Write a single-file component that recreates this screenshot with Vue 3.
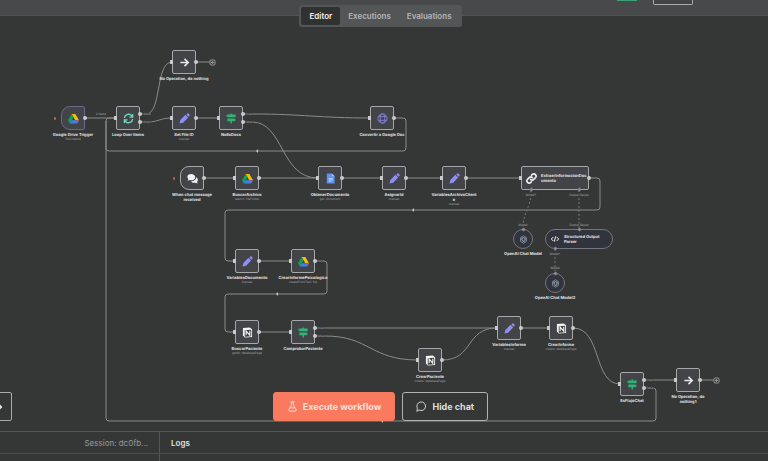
<template>
  <div class="app">
    <header class="topbar">
      <nav class="tabs">
        <button v-for="t in tabs" :key="t" class="tab" :class="{ active: t === tab }" @click="tab = t">{{ t }}</button>
      </nav>
      <div class="top-actions">
        <button class="btn-state" aria-label="Active"></button>
        <button class="btn-outline" aria-label="Save"></button>
      </div>
    </header>

    <main class="canvas">
      <svg class="edges" width="100%" height="100%">
        <path v-for="(d, i) in edges" :key="i" :d="d" class="edge" />
        <path v-for="(d, i) in dashed" :key="'d' + i" :d="d" class="edge dashed" />
        <path v-for="a in arrows" :key="a.x" :d="`M${a.x - 1} ${a.y}l2 -2v4z`" class="arrow" />
        <g v-for="p in plus" :key="p.x" class="plus">
          <rect :x="p.x" :y="p.y - 2" width="5" height="5" rx="1" />
          <path :d="`M${p.x + 1} ${p.y}.5h3M${p.x + 2}.5 ${p.y - 1}v3`" />
        </g>
        <text v-for="(t, i) in wireLabels" :key="'t' + i" :x="t[0]" :y="t[1]" class="wire-label">{{ t[2] }}</text>
      </svg>

      <div
        v-for="n in nodes"
        :key="n.id"
        class="node"
        :class="n.kind"
        :style="{ left: n.x + 'px', top: n.y + 'px' }"
      >
        <div class="box">
          <svg viewBox="0 0 24 24" class="icon" v-html="icons[n.icon]"></svg>
          <div v-if="isWide(n)" class="inner-label">
            <div v-for="l in n.label" :key="l">{{ l }}</div>
          </div>
        </div>
        <span v-if="n.in" class="port in"></span>
        <span v-if="n.out === 1" class="port out"></span>
        <template v-if="n.out === 2">
          <span class="port out up"></span>
          <span class="port out down"></span>
        </template>
        <span v-for="p in n.bottom" :key="p" class="port diamond" :style="{ left: p + 'px' }"></span>
        <span v-if="n.top" class="port top-port" :style="{ left: n.top + 'px' }"></span>
        <div v-if="!isWide(n)" class="caption">
          <div v-for="l in n.label" :key="l" class="title">{{ l }}</div>
          <div v-if="n.sub" class="sub">{{ n.sub }}</div>
        </div>
      </div>

      <button class="side-btn" aria-label="Expand">
        <svg viewBox="0 0 12 12" width="12" height="12"><path d="M1 6h9M7 3l3 3-3 3" fill="none" stroke="#e4e5e6" stroke-width="2" /></svg>
      </button>

      <div class="actions">
        <button class="btn primary">
          <svg viewBox="0 0 24 24" width="11" height="11" fill="none" stroke="currentColor" stroke-width="2" stroke-linecap="round" stroke-linejoin="round"><path d="M8 2h8M10 2v7L4 19a2 2 0 002 3h12a2 2 0 002-3L14 9V2M7 15h10" /></svg>
          Execute workflow
        </button>
        <button class="btn secondary">
          <svg viewBox="0 0 24 24" width="11" height="11" fill="none" stroke="currentColor" stroke-width="2" stroke-linecap="round" stroke-linejoin="round"><path d="M7 20a9.500 9.500 0 10-4-4L2 22z" /></svg>
          Hide chat
        </button>
      </div>
    </main>

    <footer class="panel">
      <div class="panel-head">
        <div class="session">Session: dc0fb...</div>
        <div class="logs">Logs</div>
      </div>
      <div class="panel-body">
        <div class="session"></div>
        <div class="logs"></div>
      </div>
    </footer>
  </div>
</template>

<script setup>
import { ref } from 'vue'

const tabs = ['Editor', 'Executions', 'Evaluations']
const tab = ref('Editor')

const icons = {
  arrow: '<path d="M3 12h17M12 4l8 8-8 8" fill="none" stroke="#e6e6ea" stroke-width="3.500"/>',
  drive: '<path d="M8 2h8l8 14h-8z" fill="#fbbc05"/><path d="M8 2l4 7-8 14-4-7z" fill="#12a15c"/><path d="M8 16h16l-4 7H4z" fill="#3b82f0"/><path d="M19 16h5l-4 7z" fill="#ea4335"/>',
  loop: '<path d="M3 11a9 9 0 0115-6l3 3M21 2v7h-7M21 13a9 9 0 01-15 6l-3-3M3 22v-7h7" fill="none" stroke="#6fd6bb" stroke-width="3"/>',
  pencil: '<path d="M1 23l2-8L14 4l6 6L9 21zM16 3l2-2q2-1 4 1t1 4l-2 2z" fill="#8f8ff2"/>',
  sign: '<path d="M10 1h3v2h8v6H3V3h7zM3 12h15l4 3-4 3h-5v5h-3v-5H3z" fill="#2fb574"/><path d="M3 3v6L0 6z" fill="#2fb574"/>',
  globe: '<g fill="none" stroke="#8583d8" stroke-width="2"><circle cx="12" cy="12" r="10"/><ellipse cx="12" cy="12" rx="5" ry="10"/><path d="M3 8h18M3 16h18"/></g>',
  chat: '<path d="M9 2c5 0 9 3 9 7s-4 7-9 7l-3-1-5 2 2-4C-2 8 2 2 9 2z" fill="#f1f1f3"/><path d="M20 9c4 2 5 7 2 10l1 4-5-2c-4 1-7 0-9-3 6 0 11-3 11-9z" fill="#f1f1f3"/>',
  doc: '<path d="M4 1h11l6 6v16H4z" fill="#5b94f5"/><path d="M15 1l6 6h-6z" fill="#a9c6fa"/><path d="M8 12h9M8 15h9M8 18h6" stroke="#dfe9fd" stroke-width="1.500"/>',
  link: '<g fill="none" stroke="#f1f1f3" stroke-width="3.500" stroke-linecap="round"><path d="M10 14a5 5 0 007 0l4-4a5 5 0 00-7-7l-2 2"/><path d="M14 10a5 5 0 00-7 0l-4 4a5 5 0 007 7l2-2"/></g>',
  code: '<path d="M7 6l-6 6 6 6M17 6l6 6-6 6M14 4l-4 16" fill="none" stroke="#f1f1f3" stroke-width="3"/>',
  openai: '<g fill="none" stroke="#8e95a5" stroke-width="2"><path d="M12 2l8 5v10l-8 5-8-5V7z"/><path d="M8 4v10l8 5M4 12l8-5 8 5M16 5v10l-8 5M8 10l4-3 4 3v4l-4 3-4-3z"/></g>',
  notion: '<path d="M2 2l15-1 5 4v17l-16 1-4-5z" fill="#f3f3f3"/><path d="M6 7l14-1v14L6 21z" fill="#3a3a3d"/><path d="M9 18V9l8 9V8" fill="none" stroke="#f3f3f3" stroke-width="2.500"/>',
}

const nodes = [
  { id: 1, x: 172, y: 34, icon: 'arrow', label: ['No Operation, do nothing'], in: 1, out: 1 },
  { id: 2, x: 61, y: 90, icon: 'drive', kind: 'trigger', label: ['Google Drive Trigger'], sub: 'fileCreated', out: 1 },
  { id: 3, x: 116, y: 90, icon: 'loop', label: ['Loop Over Items'], in: 1, out: 2 },
  { id: 4, x: 172, y: 90, icon: 'pencil', label: ['Set File ID'], sub: 'manual', in: 1, out: 1 },
  { id: 5, x: 219, y: 90, icon: 'sign', label: ['NoEsDocs'], in: 1, out: 2 },
  { id: 6, x: 370, y: 90, icon: 'globe', label: ['Convertir a Google Doc'], in: 1, out: 1 },
  { id: 7, x: 180, y: 150, icon: 'chat', kind: 'trigger plain', label: ['When chat message', 'received'], out: 1 },
  { id: 8, x: 235, y: 150, icon: 'drive', label: ['BuscarArchivo'], sub: 'search: fileFolder', in: 1, out: 1 },
  { id: 9, x: 318, y: 150, icon: 'doc', label: ['ObtenerDocumento'], sub: 'get: document', in: 1, out: 1 },
  { id: 10, x: 382, y: 150, icon: 'pencil', label: ['AsignarId'], sub: 'manual', in: 1, out: 1 },
  { id: 11, x: 442, y: 150, icon: 'pencil', label: ['VariablesArchivoClient', 'e'], sub: 'manual', in: 1, out: 1 },
  { id: 12, x: 521, y: 150, icon: 'link', kind: 'wide', label: ['ExtraerInformacionDoc', 'umento'], in: 1, out: 1, bottom: [10, 58] },
  { id: 13, x: 513, y: 213, icon: 'openai', kind: 'round', label: ['OpenAI Chat Model'], top: 10 },
  { id: 14, x: 545, y: 213, icon: 'code', kind: 'pill', label: ['Structured Output', 'Parser'], top: 34, bottom: [10] },
  { id: 15, x: 545, y: 257, icon: 'openai', kind: 'round', label: ['OpenAI Chat Model2'], top: 10 },
  { id: 16, x: 235, y: 233, icon: 'pencil', label: ['VariablesDocumento'], sub: 'manual', in: 1, out: 1 },
  { id: 17, x: 291, y: 233, icon: 'drive', label: ['CrearInformePsicologico'], sub: 'createFromText: file', in: 1, out: 1 },
  { id: 18, x: 235, y: 304, icon: 'notion', label: ['BuscarPaciente'], sub: 'getAll: databasePage', in: 1, out: 1 },
  { id: 19, x: 291, y: 304, icon: 'sign', label: ['ComprobarPaciente'], in: 1, out: 2 },
  { id: 20, x: 418, y: 332, icon: 'notion', label: ['CrearPaciente'], sub: 'create: databasePage', in: 1, out: 1 },
  { id: 21, x: 497, y: 300, icon: 'pencil', label: ['VariablesInforme'], sub: 'manual', in: 1, out: 1 },
  { id: 22, x: 549, y: 300, icon: 'notion', label: ['CrearInforme'], sub: 'create: databasePage', in: 1, out: 1 },
  { id: 23, x: 620, y: 356, icon: 'sign', label: ['EsFlujoChat'], in: 1, out: 2 },
  { id: 24, x: 676, y: 352, icon: 'arrow', label: ['No Operation, do', 'nothing1'], in: 1, out: 1 },
]

const edges = [
  'M85 102H116',
  'M140 98H146C162 98 155 46 172 46',
  'M140 106H148C158 106 160 102 172 102',
  'M196 102H219',
  'M243 98H256C300 98 320 102 370 102',
  'M243 106H252C284 106 280 162 318 162',
  'M394 102H403q3 0 3 3V132q0 3-3 3H109q-3 0-3-3V105q0-3 3-3H116',
  'M644 372H653q3 0 3 3V402q0 3-3 3H109q-3 0-3-3V105',
  'M204 162H235',
  'M259 162H318',
  'M342 162H382',
  'M406 162H442',
  'M466 162H521',
  'M589 162H597q3 0 3 3V191q0 3-3 3H228q-3 0-3 3V242q0 3 3 3H235',
  'M259 245H291',
  'M315 245H324q3 0 3 3V275q0 3-3 3H228q-3 0-3 3V313q0 3 3 3H235',
  'M259 316H291',
  'M315 312H497',
  'M315 320H325C370 320 370 344 418 344',
  'M442 344C474 344 465 312 497 312',
  'M521 312H549',
  'M573 312C602 312 593 368 620 368',
  'M644 364H676',
  'M196 46H210',
  'M700 364H714',
]
const dashed = ['M531 174C531 194 523 194 523 213', 'M579 174V213', 'M555 233V257']
const arrows = [{ x: 257, y: 135 }, { x: 413, y: 194 }, { x: 277, y: 278 }, { x: 382, y: 405 }]
const plus = [{ x: 210, y: 46 }, { x: 714, y: 364 }]
const wireLabels = [
  [101, 99, '2 items'],
  [147, 99, 'done'],
  [147, 107, 'loop'],
  [249, 99, 'true'],
  [249, 107, 'false'],
  [321, 313, 'true'],
  [321, 321, 'false'],
  [650, 365, 'true'],
  [650, 373, 'false'],
  [531, 180, 'Model*'],
  [579, 180, 'Output Parser'],
  [523, 210, 'Model'],
  [579, 210, 'Output Parser'],
  [555, 239, 'Model*'],
  [555, 253, 'Model'],
]

function isWide(n) { return n.kind === 'wide' || n.kind === 'pill' }
</script>

<style>
body { background: #353737; }
</style>

<style scoped>
.app { min-height: 100vh; display: flex; flex-direction: column; background: #353737; font-family: Inter, sans-serif; color: #e2e3e4; overflow: hidden; }
button { font-family: inherit; cursor: pointer; }

.topbar { position: relative; z-index: 2; box-sizing: border-box; height: 16px; display: flex; justify-content: center; align-items: flex-start; padding: 5px 7px 0 0; background: #48494b; border-bottom: 1px solid #515254; }
.tabs { display: flex; flex: none; padding: 2px; background: #535657; border-radius: 3px; }
.tab { height: 18px; padding: 0 8px; border: 0; border-radius: 2px; background: transparent; color: #b3b5b7; font-size: 8px; font-weight: 600; }
.tab.active { background: #303232; color: #f0f0f0; }
.top-actions { position: absolute; top: 0; right: 75px; display: flex; align-items: flex-start; gap: 16px; }
.btn-state { width: 20px; height: 1px; padding: 0; border: 0; background: #3da273; }
.btn-outline { width: 40px; height: 5px; padding: 0; border: 1px solid #a9aaac; border-top: 0; border-radius: 0 0 2px 2px; background: #424345; }

.canvas { position: relative; flex: 1; display: flex; flex-direction: column; justify-content: flex-end; text-rendering: geometricPrecision; }
.edges { position: absolute; inset: 0; }
.edge { fill: none; stroke: #8a8c8b; stroke-width: 1; }
.edge.dashed { stroke: #74767c; stroke-dasharray: 2 2; }
.arrow { fill: #c4c5c6; }
.plus { fill: none; stroke: #939596; stroke-width: 1; }
.wire-label { font-size: 3px; fill: #a9abac; text-anchor: middle; paint-order: stroke; stroke: #353737; stroke-width: 1px; }

.node { position: absolute; width: 24px; }
.box { box-sizing: border-box; height: 24px; display: flex; align-items: center; justify-content: center; background: #434448; border: 1px solid #a6a7a9; border-radius: 2px; }
.icon { width: 11px; height: 11px; flex: none; }
.trigger .box { border-radius: 9px 2px 2px 9px; border-color: #6a688c; }
.trigger.plain .box { border-color: #a6a7a9; }
.trigger::before { content: ''; position: absolute; left: -7px; top: 11px; width: 2px; height: 3px; border-radius: 1px; background: #c95a50; }
.wide, .pill { width: 68px; }
.wide .box, .pill .box { justify-content: flex-start; gap: 4px; padding-left: 4px; }
.pill .box { height: 20px; padding-left: 5px; gap: 5px; border-radius: 10px; }
.pill .icon { width: 8px; height: 8px; }
.round { width: 20px; }
.round .box { height: 20px; border-radius: 50%; }
.round .icon { width: 9px; height: 9px; }
.round .box, .pill .box { background: #31343d; border-color: #73757f; }
.inner-label { font-size: 4px; line-height: 5px; font-weight: 700; white-space: nowrap; }

.port { position: absolute; width: 4px; height: 4px; top: 10px; border-radius: 50%; background: #c9cacc; }
.port.in { left: -2px; width: 3px; border-radius: 0; }
.port.out { right: -2px; }
.port.up { top: 6px; }
.port.down { top: 14px; }
.port.diamond, .port.top-port { width: 3px; height: 3px; margin-left: -1px; border-radius: 0; transform: rotate(45deg); background: #8c8e96; }
.port.diamond { top: auto; bottom: -1px; }
.port.top-port { top: -1px; }

.caption { display: flex; flex-direction: column; align-items: center; margin: 2px -20px 0; line-height: 5px; text-align: center; white-space: nowrap; }
.title { font-size: 4px; font-weight: 700; }
.sub { font-size: 3px; color: #a0a2a3; }

.side-btn { position: absolute; left: -17px; bottom: 10px; width: 29px; height: 29px; display: flex; align-items: center; justify-content: flex-end; padding: 0 8px 0 0; border: 1px solid #a9aaac; border-radius: 2px; background: #353737; }
.actions { position: relative; display: flex; justify-content: center; gap: 7px; padding: 0 7px 10px 0; }
.btn { box-sizing: border-box; height: 29px; display: flex; align-items: center; gap: 5px; padding: 0 13px; border: 1px solid #b0b1b2; border-radius: 3px; background: #353737; color: #dedfdf; font-size: 9px; font-weight: 700; }
.btn.primary { background: #f97a5f; border-color: #f97a5f; color: #f8e1db; }

.panel { border-top: 1px solid #555757; }
.panel-head, .panel-body { display: flex; }
.panel-head { height: 21px; border-bottom: 1px solid #4c4e4e; line-height: 22px; }
.panel-body { height: 7px; }
.session { box-sizing: border-box; width: 160px; padding-right: 11px; border-right: 1px solid #555757; font-size: 8px; color: #999b9c; text-align: right; }
.logs { flex: 1; padding-left: 11px; font-size: 8px; font-weight: 600; }
</style>
